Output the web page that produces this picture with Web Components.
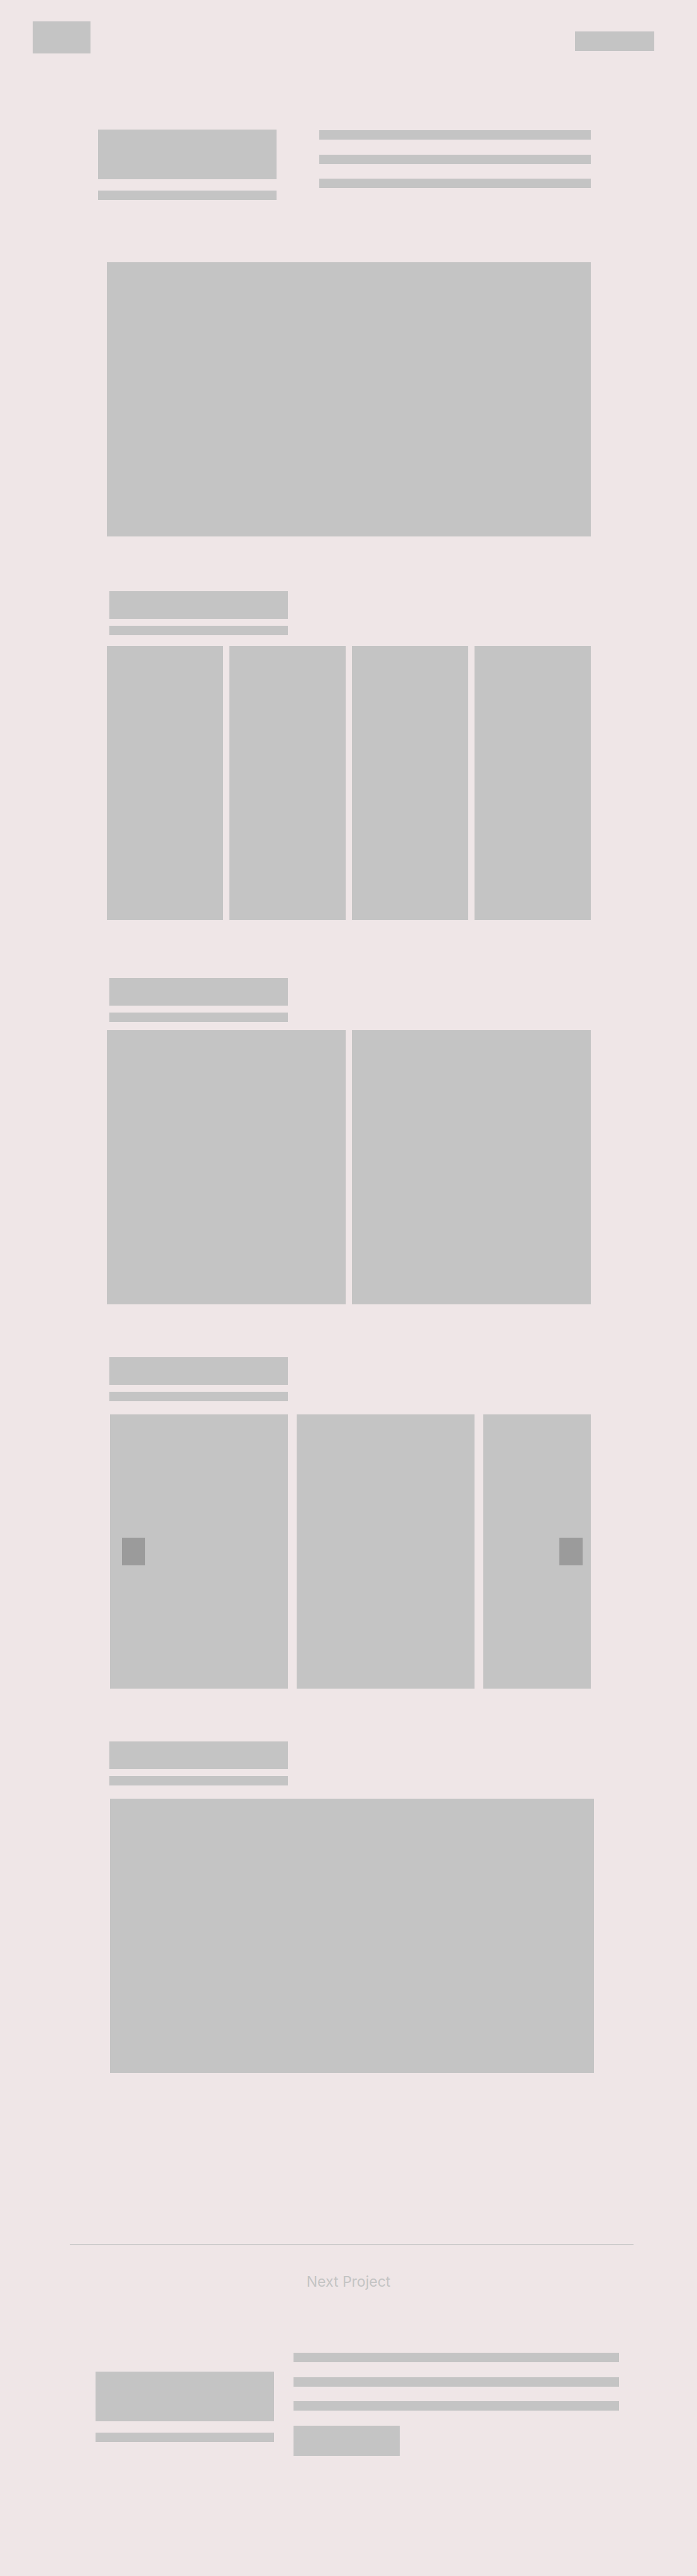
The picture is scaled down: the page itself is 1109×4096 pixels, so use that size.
<!DOCTYPE html>
<html lang="en">
<head>
<meta charset="utf-8">
<meta name="viewport" content="width=device-width, initial-scale=1">
<title>Project</title>
<style>
  :root { --surface: #efe6e7; --block: #c4c4c4; --control: #9b9b9b; }
  body { margin: 0; background: var(--surface); font-family: Inter, "Open Sans", sans-serif; }
</style>
</head>
<body>
<project-page></project-page>
<script>
const define = (name, html) => {
  const template = document.createElement('template');
  template.innerHTML = html;
  customElements.define(name, class extends HTMLElement {
    constructor() {
      super();
      this.attachShadow({ mode: 'open' }).append(template.content.cloneNode(true));
    }
  });
};

define('block-shape', `
  <style>:host { display: block; background: var(--block); height: 15px; }</style>`);

define('media-block', `
  <style>:host { display: block; background: var(--block); height: 436px; }</style>`);

define('site-header', `
  <style>
    :host { display: block; }
    header { display: flex; justify-content: space-between; align-items: flex-start; padding: 34px 68px 0 52px; }
    a { display: block; background: var(--block); }
    .logo { width: 92px; height: 51px; }
    nav { padding-top: 16px; }
    nav a { width: 126px; height: 31px; }
  </style>
  <header>
    <a class="logo" href="#" aria-label="Home"></a>
    <nav><a href="#" aria-label="Menu"></a></nav>
  </header>`);

define('title-block', `
  <style>
    :host { display: flex; flex-direction: column; gap: 18px; width: 284px; }
    .title { height: 79px; }
  </style>
  <block-shape class="title"></block-shape>
  <block-shape></block-shape>`);

define('text-lines', `
  <style>:host { display: flex; flex-direction: column; justify-content: space-between; height: 92px; }</style>
  <block-shape></block-shape><block-shape></block-shape><block-shape></block-shape>`);

define('project-intro', `
  <style>
    :host { display: flex; gap: 68px; padding: 121px 169px 0 156px; }
    text-lines { flex: 1; padding-top: 1px; }
  </style>
  <title-block></title-block>
  <text-lines></text-lines>`);

define('section-heading', `
  <style>
    :host { display: flex; flex-direction: column; gap: 11px; width: 284px; padding-left: 4px; }
    .title { height: 44px; }
  </style>
  <block-shape class="title"></block-shape>
  <block-shape></block-shape>`);

define('project-section', `
  <style>
    :host { display: flex; flex-direction: column; gap: var(--heading-gap, 17px); }
  </style>
  <section-heading></section-heading>
  <slot></slot>`);

define('media-row', `
  <style>:host { display: grid; grid-auto-flow: column; grid-auto-columns: 1fr; gap: 10px; }</style>
  <slot></slot>`);

define('media-carousel', `
  <style>
    :host { display: grid; grid-template-columns: 283fr 283fr 171fr; gap: 14px; margin-left: 5px; position: relative; }
    button { position: absolute; top: calc(50% - 22px); width: 37px; height: 44px; padding: 0; border: 0; border-radius: 0; background: var(--control); }
    .previous { left: 19px; }
    .next { right: 13px; }
  </style>
  <media-block></media-block><media-block></media-block><media-block></media-block>
  <button class="previous" aria-label="Previous"></button>
  <button class="next" aria-label="Next"></button>`);

define('next-project', `
  <style>
    :host { display: block; padding: 272px 101px 191px 111px; }
    hr { margin: 0; border: 0; height: 2px; background: var(--block); opacity: .75; }
    h2 { margin: 42px 0 0; padding-right: 10px; font-size: 23px; line-height: 32px; font-weight: 400; color: var(--block); text-align: center; }
    .preview { display: flex; gap: 31px; padding: 97px 23px 0 41px; }
    title-block { padding-top: 30px; }
    .details { flex: 1; display: flex; flex-direction: column; gap: 24px; }
    button { width: 169px; height: 48px; padding: 0; border: 0; border-radius: 0; background: var(--block); }
  </style>
  <hr>
  <h2>Next Project</h2>
  <div class="preview">
    <title-block></title-block>
    <div class="details">
      <text-lines></text-lines>
      <button aria-label="View project"></button>
    </div>
  </div>`);

define('project-page', `
  <style>
    :host { display: block; }
    main { display: flex; flex-direction: column; padding: 99px 169px 0 170px; }
    .grid { padding-top: 87px; }
    .pair { padding-top: 92px; --heading-gap: 13px; }
    .slides, .closing { padding-top: 84px; --heading-gap: 21px; }
    .closing media-block { margin: 0 -5px 0 5px; }
  </style>
  <site-header></site-header>
  <project-intro></project-intro>
  <main>
    <media-block></media-block>
    <project-section class="grid">
      <media-row><media-block></media-block><media-block></media-block><media-block></media-block><media-block></media-block></media-row>
    </project-section>
    <project-section class="pair">
      <media-row><media-block></media-block><media-block></media-block></media-row>
    </project-section>
    <project-section class="slides"><media-carousel></media-carousel></project-section>
    <project-section class="closing"><media-block></media-block></project-section>
  </main>
  <next-project></next-project>`);
</script>
</body>
</html>
